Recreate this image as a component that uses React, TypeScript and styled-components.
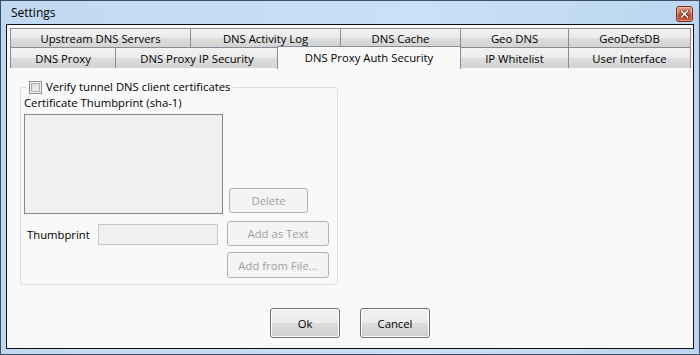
import React from "react";
import styled, { createGlobalStyle } from "styled-components";

const Global = createGlobalStyle`
  html, body { margin: 0; padding: 0; background: #ffffff; }
  * { box-sizing: border-box; }
  body { font-family: "Open Sans", "Noto Sans", sans-serif; font-size: 11.3px; color: #000; }
`;

const Window = styled.div`
  width: 700px;
  height: 355px;
  border: 1px solid #3d4f68;
  background: linear-gradient(90deg, #c0d9f2 0%, #c9e0f6 60%, #bcd6f1 100%);
  display: flex;
  flex-direction: column;
  padding: 0 5px 5px 5px;
`;

const TitleBar = styled.div`
  height: 23px;
  display: flex;
  align-items: center;
  justify-content: space-between;
  padding: 0 1px 0 5px;
`;

const Title = styled.span`
  font-size: 12px;
  color: #000;
`;

const CloseButton = styled.div`
  width: 17px;
  height: 16px;
  margin-top: 2px;
  border: 1px solid #7d2d20;
  border-radius: 3px;
  background: linear-gradient(#e59a86 0%, #d06a52 45%, #c0432a 55%, #c9593c 100%);
  display: flex;
  align-items: center;
  justify-content: center;
  box-shadow: inset 0 0 0 1px rgba(255, 255, 255, 0.35);
`;

const Client = styled.div`
  flex: 1;
  border: 1px solid #111111;
  background: #f9f9f9;
  display: flex;
  flex-direction: column;
`;

const TabStrip = styled.div`
  margin: 3px 2px 0 3px;
  display: flex;
  flex-direction: column;
`;

const TabRow = styled.div<{ $cols: string }>`
  display: grid;
  grid-template-columns: ${(p) => p.$cols};
`;

const Tab = styled.div<{ $selected?: boolean; $h: number }>`
  height: ${(p) => p.$h}px;
  border: 1px solid #898c95;
  border-bottom: none;
  margin-right: -1px;
  display: flex;
  align-items: center;
  justify-content: center;
  white-space: nowrap;
  background: linear-gradient(#f2f2f2 0%, #ebebeb 50%, #dddddd 51%, #d3d3d3 100%);
  position: relative;
  ${(p) =>
    p.$selected &&
    `
    background: #f9f9f9;
    margin: -1px -1px -1px -1px;
    height: ${p.$h + 2}px;
    z-index: 2;
    padding-bottom: 2px;
  `}
`;

const Panel = styled.div`
  flex: 1;
  padding: 12px 0 0 13px;
`;

const GroupBox = styled.fieldset`
  width: 318px;
  margin: 0;
  padding: 0 3px 6px 3px;
  border: 1px solid #d5dfe5;
  border-radius: 3px;
`;

const Legend = styled.legend`
  margin-left: 2px;
  padding: 0 3px 0 3px;
  display: flex;
  align-items: center;
  gap: 4px;
  line-height: 14px;
  height: 14px;
`;

const CheckBox = styled.span`
  width: 13px;
  height: 13px;
  border: 1px solid #8e8f8f;
  background: linear-gradient(135deg, #d8d8d8 0%, #f4f4f4 100%);
  box-shadow: inset 0 0 0 1px #f4f4f4, inset 0 0 0 2px #aeb0b3;
  display: inline-block;
`;

const Label = styled.div`
  margin-top: 1px;
  line-height: 16px;
  height: 16px;
`;

const Grid = styled.div`
  display: grid;
  grid-template-columns: 203px 102px;
  margin-top: 3px;
`;

const ListBox = styled.div`
  width: 199px;
  height: 100px;
  border: 1px solid #828790;
  background: #f0f0f0;
`;

const Button = styled.button<{ $w: number; $h: number; $disabled?: boolean }>`
  width: ${(p) => p.$w}px;
  height: ${(p) => p.$h}px;
  font-family: inherit;
  font-size: 11.3px;
  padding: 0;
  border-radius: 3px;
  border: 1px solid ${(p) => (p.$disabled ? "#adb2b5" : "#707070")};
  color: ${(p) => (p.$disabled ? "#a0a0a0" : "#000")};
  background: ${(p) =>
    p.$disabled
      ? "#f4f4f4"
      : "linear-gradient(#f2f2f2 0%, #ebebeb 50%, #dddddd 51%, #cfcfcf 100%)"};
  box-shadow: ${(p) => (p.$disabled ? "none" : "inset 0 0 0 1px #fcfcfc")};
`;

const DeleteWrap = styled.div`
  align-self: end;
  padding: 0 0 1px 2px;
`;

const FieldRow = styled.div`
  display: flex;
  align-items: center;
  padding-left: 3px;
  margin-top: 9px;
`;

const FieldLabel = styled.span`
  width: 71px;
`;

const TextBox = styled.div`
  width: 120px;
  height: 21px;
  border: 1px solid #c5c8cc;
  background: #f0f0f0;
`;

const ButtonCell = styled.div<{ $mt: number }>`
  margin-top: ${(p) => p.$mt}px;
`;

const Footer = styled.div`
  display: flex;
  justify-content: center;
  gap: 20px;
  padding: 0 0 10px 0;
`;

const row1 = [
  ["Upstream DNS Servers", 180],
  ["DNS Activity Log", 150],
  ["DNS Cache", 120],
  ["Geo DNS", 108],
  ["GeoDefsDB", 122],
] as const;

const row2 = [
  ["DNS Proxy", 105],
  ["DNS Proxy IP Security", 163],
  ["DNS Proxy Auth Security", 182],
  ["IP Whitelist", 108],
  ["User Interface", 122],
] as const;

export default function App() {
  return (
    <>
      <Global />
      <Window>
        <TitleBar>
          <Title>Settings</Title>
          <CloseButton>
            <svg width="9" height="8" viewBox="0 0 9 8">
              <path d="M1.5 1 L7.5 7 M7.5 1 L1.5 7" stroke="#5a1a10" strokeWidth="3" strokeLinecap="square" />
              <path d="M1.5 1 L7.5 7 M7.5 1 L1.5 7" stroke="#ffffff" strokeWidth="1.6" strokeLinecap="square" />
            </svg>
          </CloseButton>
        </TitleBar>
        <Client>
          <TabStrip>
            <TabRow $cols={row1.map((t) => `${t[1]}px`).join(" ")}>
              {row1.map(([name]) => (
                <Tab key={name} $h={19}>{name}</Tab>
              ))}
            </TabRow>
            <TabRow $cols={row2.map((t) => `${t[1]}px`).join(" ")}>
              {row2.map(([name]) => (
                <Tab key={name} $h={21} $selected={name === "DNS Proxy Auth Security"}>
                  {name}
                </Tab>
              ))}
            </TabRow>
          </TabStrip>
          <Panel>
            <GroupBox>
              <Legend>
                <CheckBox />
                <span>Verify tunnel DNS client certificates</span>
              </Legend>
              <Label>Certificate Thumbprint (sha-1)</Label>
              <Grid>
                <ListBox />
                <DeleteWrap>
                  <Button $w={79} $h={25} $disabled>Delete</Button>
                </DeleteWrap>
                <FieldRow>
                  <FieldLabel>Thumbprint</FieldLabel>
                  <TextBox />
                </FieldRow>
                <ButtonCell $mt={7}>
                  <Button $w={102} $h={25} $disabled>Add as Text</Button>
                </ButtonCell>
                <div />
                <ButtonCell $mt={6}>
                  <Button $w={102} $h={26} $disabled>Add from File...</Button>
                </ButtonCell>
              </Grid>
            </GroupBox>
          </Panel>
          <Footer>
            <Button $w={70} $h={30}>Ok</Button>
            <Button $w={70} $h={30}>Cancel</Button>
          </Footer>
        </Client>
      </Window>
    </>
  );
}
